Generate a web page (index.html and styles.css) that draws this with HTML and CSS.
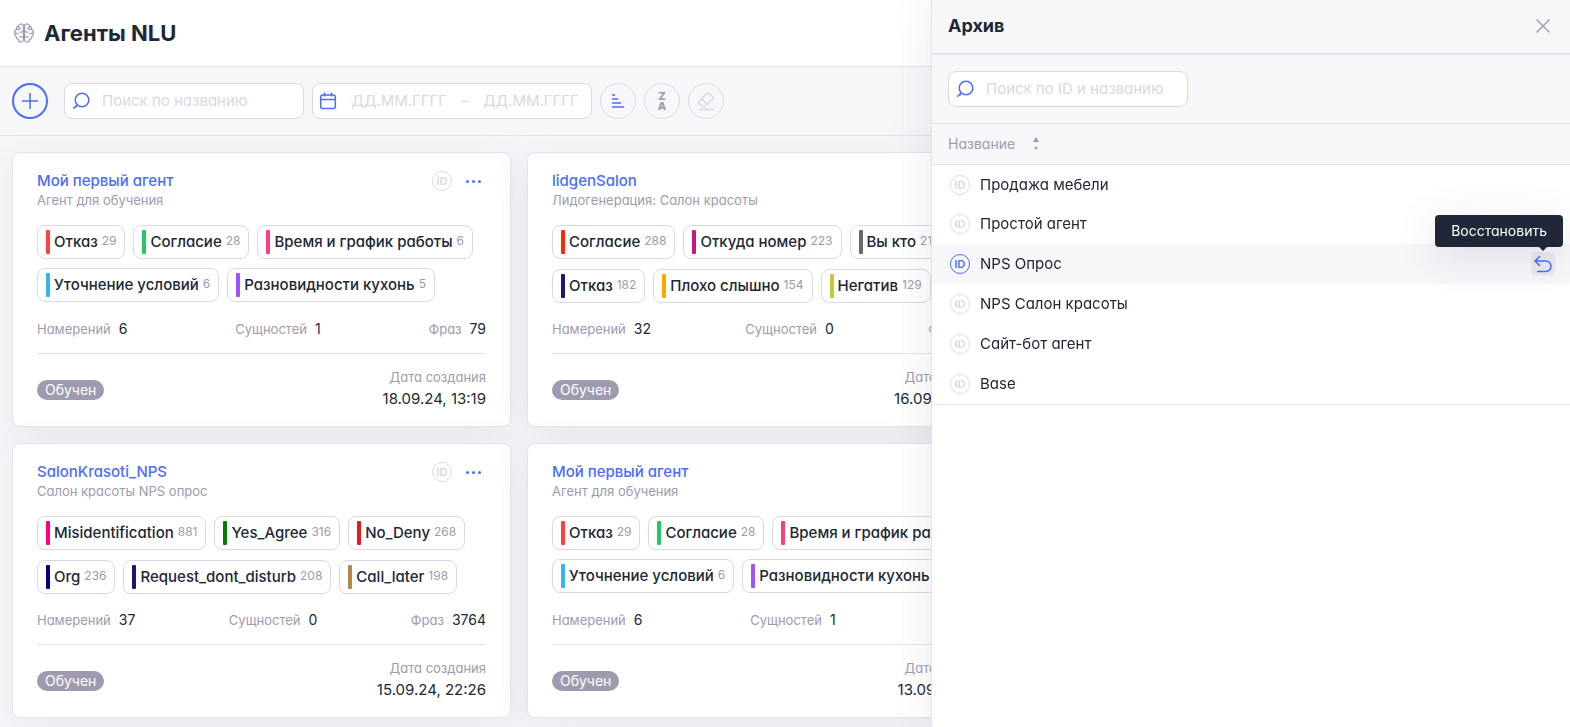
FILE: index.html
```html
<!DOCTYPE html>
<html lang="ru">
<head>
<meta charset="utf-8">
<title>Агенты NLU</title>
<link rel="stylesheet" href="styles.css">
</head>
<body>
<div class="app">
  <header class="page-head">
    <svg class="brain" viewBox="0 0 20 20" width="20" height="20" aria-hidden="true">
      <g id="lobe">
        <path d="M9.4 2.6C9 1.2 7.600.6 6.300 1 5 1.300 4.300 2.300 4.300 3.400 2.800 3.800 2 5 2.300 6.600 1 7.300.5 8.600.8 10 .5 11.500 1 12.800 2.200 13.500 2 15.200 2.900 16.300 4.400 16.600 4.700 18.300 6 19.200 7.400 19 8.500 18.800 9.200 18.100 9.400 17.200Z"/>
        <path d="M4.300 3.600C4.500 4.800 5.400 5.500 6.500 5.400M2.600 6.700C3.500 6.100 4.600 6.200 5.300 6.900M9.300 7.800C8.600 9 7.400 9.500 5.900 9.200M1 10.600C2 9.900 3.300 10.200 4.100 11.200M9.300 13.800C7.900 14.400 6.700 14.200 5.900 13.500"/>
      </g>
      <use href="#lobe" transform="matrix(-1 0 0 1 20 0)"/>
    </svg>
    <h1>Агенты NLU</h1>
  </header>

  <div class="toolbar">
    <button class="round round--add" type="button" aria-label="Добавить">
      <svg viewBox="0 0 16 16" width="16" height="16"><path d="M8 0v16M0 8h16"/></svg>
    </button>
    <label class="field field--search">
      <svg viewBox="0 0 18 18" width="18" height="18"><circle cx="10" cy="8" r="6.800"/><path d="M5.200 12.800L1.200 16.800M3.600 14.200l1.200 1.200"/></svg>
      <input type="text" placeholder="Поиск по названию" aria-label="Поиск по названию">
    </label>
    <div class="field field--date">
      <svg viewBox="0 0 18 18" width="18" height="18"><rect x="1.700" y="3" width="14.600" height="13.600" rx="2"/><path d="M1.700 7.500h14.600M5.500.5v4M12.500.5v4"/></svg>
      <input type="text" placeholder="ДД.ММ.ГГГГ" aria-label="Дата с">
      <span>–</span>
      <input type="text" placeholder="ДД.ММ.ГГГГ" aria-label="Дата по">
    </div>
    <div class="actions">
      <button class="round" type="button" aria-label="Сортировка">
        <svg class="bars" viewBox="0 0 12 14" width="12" height="14"><path d="M0 1h3M0 5h6M0 9h9M0 13h12"/></svg>
      </button>
      <button class="round za" type="button"><span>Z</span><span>A</span></button>
      <button class="round eraser" type="button" aria-label="Очистить" disabled>
        <svg viewBox="0 0 18 20" width="18" height="20"><path d="M2 10.500L10 2.300Q11 1.300 12 2.300L15.700 6Q16.700 7 15.700 8L7.500 15.800Q6.500 16.700 5.500 15.800L1.800 12.300Q1 11.400 2 10.500ZM5 7.800L10.300 13.100M1.500 18.500H17"/></svg>
      </button>
    </div>
  </div>

  <main class="cards">
    <article class="card">
      <div class="card-head">
        <div><a class="card-title" href="#">Мой первый агент</a><p class="card-sub">Агент для обучения</p></div>
        <div class="card-tools"><button class="id" type="button">ID</button><button class="more" type="button" aria-label="Меню"><i></i><i></i><i></i></button></div>
      </div>
      <ul class="tags">
        <li class="tag red">Отказ <small>29</small></li>
        <li class="tag green">Согласие <small>28</small></li>
        <li class="tag pink">Время и график работы <small>6</small></li>
        <li class="tag sky">Уточнение условий <small>6</small></li>
        <li class="tag violet">Разновидности кухонь <small>5</small></li>
      </ul>
      <dl class="stats">
        <div><dt>Намерений</dt><dd>6</dd></div>
        <div><dt>Сущностей</dt><dd>1</dd></div>
        <div><dt>Фраз</dt><dd>79</dd></div>
      </dl>
      <footer class="card-foot"><span class="badge">Обучен</span><p class="date"><span>Дата создания</span><time>18.09.24, 13:19</time></p></footer>
    </article>

    <article class="card">
      <div class="card-head">
        <div><a class="card-title" href="#">lidgenSalon</a><p class="card-sub">Лидогенерация: Салон красоты</p></div>
        <div class="card-tools"><button class="id" type="button">ID</button><button class="more" type="button" aria-label="Меню"><i></i><i></i><i></i></button></div>
      </div>
      <ul class="tags tags--full">
        <li class="tag scarlet">Согласие <small>288</small></li>
        <li class="tag magenta">Откуда номер <small>223</small></li>
        <li class="tag gray">Вы кто <small>215</small></li>
        <li class="tag midnight">Отказ <small>182</small></li>
        <li class="tag orange">Плохо слышно <small>154</small></li>
        <li class="tag lime">Негатив <small>129</small></li>
      </ul>
      <dl class="stats">
        <div><dt>Намерений</dt><dd>32</dd></div>
        <div><dt>Сущностей</dt><dd>0</dd></div>
        <div><dt>Фраз</dt><dd>1988</dd></div>
      </dl>
      <footer class="card-foot"><span class="badge">Обучен</span><p class="date"><span>Дата создания</span><time>16.09.24, 12:40</time></p></footer>
    </article>

    <article class="card">
      <div class="card-head">
        <div><a class="card-title" href="#">SalonKrasoti_NPS</a><p class="card-sub">Салон красоты NPS опрос</p></div>
        <div class="card-tools"><button class="id" type="button">ID</button><button class="more" type="button" aria-label="Меню"><i></i><i></i><i></i></button></div>
      </div>
      <ul class="tags tags--full">
        <li class="tag rose">Misidentification <small>881</small></li>
        <li class="tag forest">Yes_Agree <small>316</small></li>
        <li class="tag crimson">No_Deny <small>268</small></li>
        <li class="tag navy">Org <small>236</small></li>
        <li class="tag midnight">Request_dont_disturb <small>208</small></li>
        <li class="tag bronze">Call_later <small>198</small></li>
      </ul>
      <dl class="stats">
        <div><dt>Намерений</dt><dd>37</dd></div>
        <div><dt>Сущностей</dt><dd>0</dd></div>
        <div><dt>Фраз</dt><dd>3764</dd></div>
      </dl>
      <footer class="card-foot"><span class="badge">Обучен</span><p class="date"><span>Дата создания</span><time>15.09.24, 22:26</time></p></footer>
    </article>

    <article class="card">
      <div class="card-head">
        <div><a class="card-title" href="#">Мой первый агент</a><p class="card-sub">Агент для обучения</p></div>
        <div class="card-tools"><button class="id" type="button">ID</button><button class="more" type="button" aria-label="Меню"><i></i><i></i><i></i></button></div>
      </div>
      <ul class="tags">
        <li class="tag red">Отказ <small>29</small></li>
        <li class="tag green">Согласие <small>28</small></li>
        <li class="tag pink">Время и график работы <small>6</small></li>
        <li class="tag sky">Уточнение условий <small>6</small></li>
        <li class="tag violet">Разновидности кухонь <small>5</small></li>
      </ul>
      <dl class="stats">
        <div><dt>Намерений</dt><dd>6</dd></div>
        <div><dt>Сущностей</dt><dd>1</dd></div>
        <div><dt>Фраз</dt><dd>79</dd></div>
      </dl>
      <footer class="card-foot"><span class="badge">Обучен</span><p class="date"><span>Дата создания</span><time>13.09.24, 13:19</time></p></footer>
    </article>
  </main>
</div>

<aside class="drawer">
  <header class="drawer-head">
    <h2>Архив</h2>
    <button class="close" type="button" aria-label="Закрыть"><svg viewBox="0 0 14 14" width="14" height="14"><path d="M.5.5l13 13M13.500.5l-13 13"/></svg></button>
  </header>
  <div class="drawer-tools">
    <label class="field field--search">
      <svg viewBox="0 0 18 18" width="18" height="18"><circle cx="10" cy="8" r="6.800"/><path d="M5.200 12.800L1.200 16.800M3.600 14.200l1.200 1.200"/></svg>
      <input type="text" placeholder="Поиск по ID и названию" aria-label="Поиск по ID и названию">
    </label>
  </div>
  <table class="archive">
    <thead>
      <tr><th scope="col" colspan="2"><button class="sort" type="button">Название <svg viewBox="0 0 6 14" width="6" height="14"><path d="M3 0l3 5H0zM1 10h4l-2 3z"/></svg></button></th></tr>
    </thead>
    <tbody>
      <tr><td><div class="name"><button class="id" type="button">ID</button>Продажа мебели</div></td><td></td></tr>
      <tr><td><div class="name"><button class="id" type="button">ID</button>Простой агент</div></td><td></td></tr>
      <tr class="active"><td><div class="name"><button class="id" type="button">ID</button>NPS Опрос</div></td>
        <td><div class="restore-wrap"><button class="restore" type="button" aria-label="Восстановить"><svg viewBox="0 0 18 18" width="18" height="18"><path d="M6 1L1 6l5 5M1 6h10.800a5.200 5.200 0 0 1 0 10.400H3"/></svg></button><span class="tooltip" role="tooltip">Восстановить</span></div></td></tr>
      <tr><td><div class="name"><button class="id" type="button">ID</button>NPS Салон красоты</div></td><td></td></tr>
      <tr><td><div class="name"><button class="id" type="button">ID</button>Сайт-бот агент</div></td><td></td></tr>
      <tr><td><div class="name"><button class="id" type="button">ID</button>Base</div></td><td></td></tr>
    </tbody>
  </table>
</aside>
</body>
</html>
```

FILE: styles.css
```css
:root {
  --ink: #202738;
  --blue: #4a6dff;
  --gray: #9e9ab0;
  --line: #e4e2ed;
  --edge: #dad8e4;
  --soft: #f7f7fa;
}
* { box-sizing: border-box; }
body, h1, h2, p, ul, dl, dd { margin: 0; padding: 0; }
body {
  font-family: Inter, "Noto Sans", sans-serif;
  font-feature-settings: "cv11";
  font-size: 14px;
  line-height: 20px;
  color: var(--ink);
}
button, input { font: inherit; font-feature-settings: inherit; color: inherit; }
button { padding: 0; border: 0; background: none; cursor: pointer; }
svg { display: block; flex: none; fill: none; stroke: currentColor; }

.app { height: 100vh; overflow: hidden; background: var(--soft); }
.page-head {
  display: flex;
  align-items: center;
  gap: 10px;
  height: 67px;
  padding: 0 14px;
  background: #fff;
  border-bottom: 1px solid var(--line);
}
.brain { color: var(--gray); stroke-width: 1.2; stroke-linecap: round; }
h1 { font-size: 22px; line-height: 28px; font-weight: 700; }

.toolbar {
  display: flex;
  align-items: center;
  gap: 8px;
  padding: 16px 12px;
  border-bottom: 1px solid var(--line);
}
.round {
  display: flex;
  align-items: center;
  justify-content: center;
  width: 36px;
  height: 36px;
  border: 1px solid var(--edge);
  border-radius: 50%;
}
.round--add { margin-right: 8px; border: 2px solid var(--blue); color: var(--blue); }
.round--add svg { stroke-width: 1.5; }
.actions { display: flex; gap: 8px; }
.bars { color: var(--blue); stroke-width: 1.6; }
.za { flex-direction: column; color: var(--gray); font-size: 11px; line-height: 10px; font-weight: 800; }
.eraser { color: var(--edge); stroke-width: 1.5; }

.field {
  display: flex;
  align-items: center;
  height: 36px;
  background: #fff;
  border: 1px solid var(--edge);
  border-radius: 8px;
  font-size: 15px;
}
.field svg { color: var(--blue); stroke-width: 1.5; }
.field input { min-width: 0; padding: 0; border: 0; outline: 0; background: none; }
.field input::placeholder { color: var(--edge); opacity: 1; }
.field--search { width: 240px; gap: 12px; padding: 0 7px; }
.field--search input { flex: 1; }
.field--date { width: 280px; gap: 8px; padding: 0 6px; color: var(--edge); }
.field--date input { flex: 1; text-align: center; }

.cards {
  display: grid;
  grid-template-columns: repeat(3, 1fr);
  gap: 16px;
  padding: 16px 29px 16px 12px;
}
.card {
  padding: 16px 24px;
  background: #fff;
  border: 1px solid var(--line);
  border-radius: 8px;
  box-shadow: 0 8px 40px rgba(60, 50, 90, .08);
}
.card:nth-child(odd) { grid-column: 1; }
.card:nth-child(even) { grid-column: 2; }
.card-head { display: flex; justify-content: space-between; }
.card-title { display: block; margin-top: 2px; color: var(--blue); font-size: 15px; font-weight: 500; text-decoration: none; }
.card-sub { color: var(--gray); font-size: 13px; line-height: 18px; }
.card-tools { display: flex; gap: 14px; height: 24px; align-items: center; padding-right: 5px; }
.id {
  width: 20px;
  height: 20px;
  border: 1px solid var(--edge);
  border-radius: 50%;
  color: var(--edge);
  font-size: 11px;
  line-height: 18px;
  font-weight: 600;
}
.more { display: flex; gap: 3px; }
.more i { width: 3px; height: 3px; border-radius: 50%; background: var(--blue); }

.tags {
  display: flex;
  flex-wrap: wrap;
  align-content: flex-start;
  gap: 9px 8px;
  height: 78px;
  margin-top: 16px;
  list-style: none;
}
.tags--full { row-gap: 10px; }
.tag {
  display: flex;
  align-items: center;
  gap: 4px;
  height: 34px;
  padding: 0 8px;
  border: 1px solid var(--edge);
  border-radius: 8px;
  font-size: 15px;
  font-weight: 500;
  white-space: nowrap;
}
.tag::before { content: ""; width: 4px; height: 24px; border-radius: 1px; background: var(--tone); }
.tag small { color: var(--gray); font-size: 12px; line-height: 18px; font-weight: 400; margin-bottom: 3px; }
.red { --tone: #ff4141; }
.green { --tone: #1fcb66; }
.pink { --tone: #ff3d81; }
.sky { --tone: #33b5f0; }
.violet { --tone: #a052ff; }
.scarlet { --tone: #ff2a00; }
.magenta { --tone: #c71585; }
.gray { --tone: #696969; }
.midnight { --tone: #191970; }
.orange { --tone: #ffa500; }
.lime { --tone: #c8c837; }
.rose { --tone: #ff0080; }
.forest { --tone: #008000; }
.crimson { --tone: #e6191e; }
.navy { --tone: #000080; }
.bronze { --tone: #b88746; }

.stats {
  display: flex;
  justify-content: space-between;
  margin-top: 16px;
  padding-bottom: 14px;
  border-bottom: 1px solid var(--line);
}
.stats div { display: flex; gap: 8px; }
.stats dt { color: var(--gray); font-size: 13px; }
.card-foot { display: flex; justify-content: space-between; align-items: center; padding-top: 12px; }
.badge { margin-top: 4px; padding: 0 8px; border-radius: 10px; background: var(--gray); color: #fff; }
.date { display: flex; flex-direction: column; text-align: right; }
.date span { color: var(--gray); font-size: 13px; line-height: 22px; }
.date time { font-size: 15px; line-height: 22px; }

.drawer {
  position: fixed;
  inset: 0 0 0 auto;
  width: 639px;
  max-width: 100%;
  background: #fff;
  border-left: 1px solid var(--line);
  box-shadow: 0 0 40px rgba(60, 50, 90, .1);
}
.drawer-head {
  display: flex;
  align-items: center;
  justify-content: space-between;
  height: 55px;
  padding: 0 20px 2px 16px;
  background: var(--soft);
  border-bottom: 2px solid var(--line);
}
h2 { font-size: 18px; line-height: 24px; font-weight: 700; }
.close { color: var(--gray); stroke-width: 1.4; }
.drawer-tools { padding: 16px; background: var(--soft); border-bottom: 1px solid var(--line); }
.archive { width: 100%; border-spacing: 0; border-bottom: 1px solid var(--line); }
.archive th { height: 40px; padding: 0 16px; background: var(--soft); text-align: left; font-weight: 400; }
.archive td { height: 40px; padding: 0 15px 0 18px; }
.archive tbody tr:first-child td { border-top: 1px solid var(--line); }
.sort { display: flex; align-items: center; gap: 18px; color: var(--gray); }
.sort svg { fill: currentColor; stroke: none; }
.name { display: flex; align-items: center; gap: 10px; font-size: 15px; }
.active td { background: var(--soft); }
.active .id { color: var(--blue); border-color: var(--blue); }
.restore-wrap { position: relative; width: 24px; margin-left: auto; }
.restore { display: flex; align-items: center; justify-content: center; width: 24px; height: 24px; border-radius: 4px; background: #ebeaf1; color: var(--blue); stroke-width: 1.5; }
.tooltip {
  position: absolute;
  right: -8px;
  bottom: 29px;
  padding: 6px 16px;
  border-radius: 4px;
  background: var(--ink);
  color: #fff;
  box-shadow: 0 8px 40px rgba(60, 50, 90, .15);
}
.tooltip::after {
  content: "";
  position: absolute;
  right: 16px;
  top: 100%;
  border: 4px solid transparent;
  border-top-color: var(--ink);
  border-bottom: 0;
}
```
